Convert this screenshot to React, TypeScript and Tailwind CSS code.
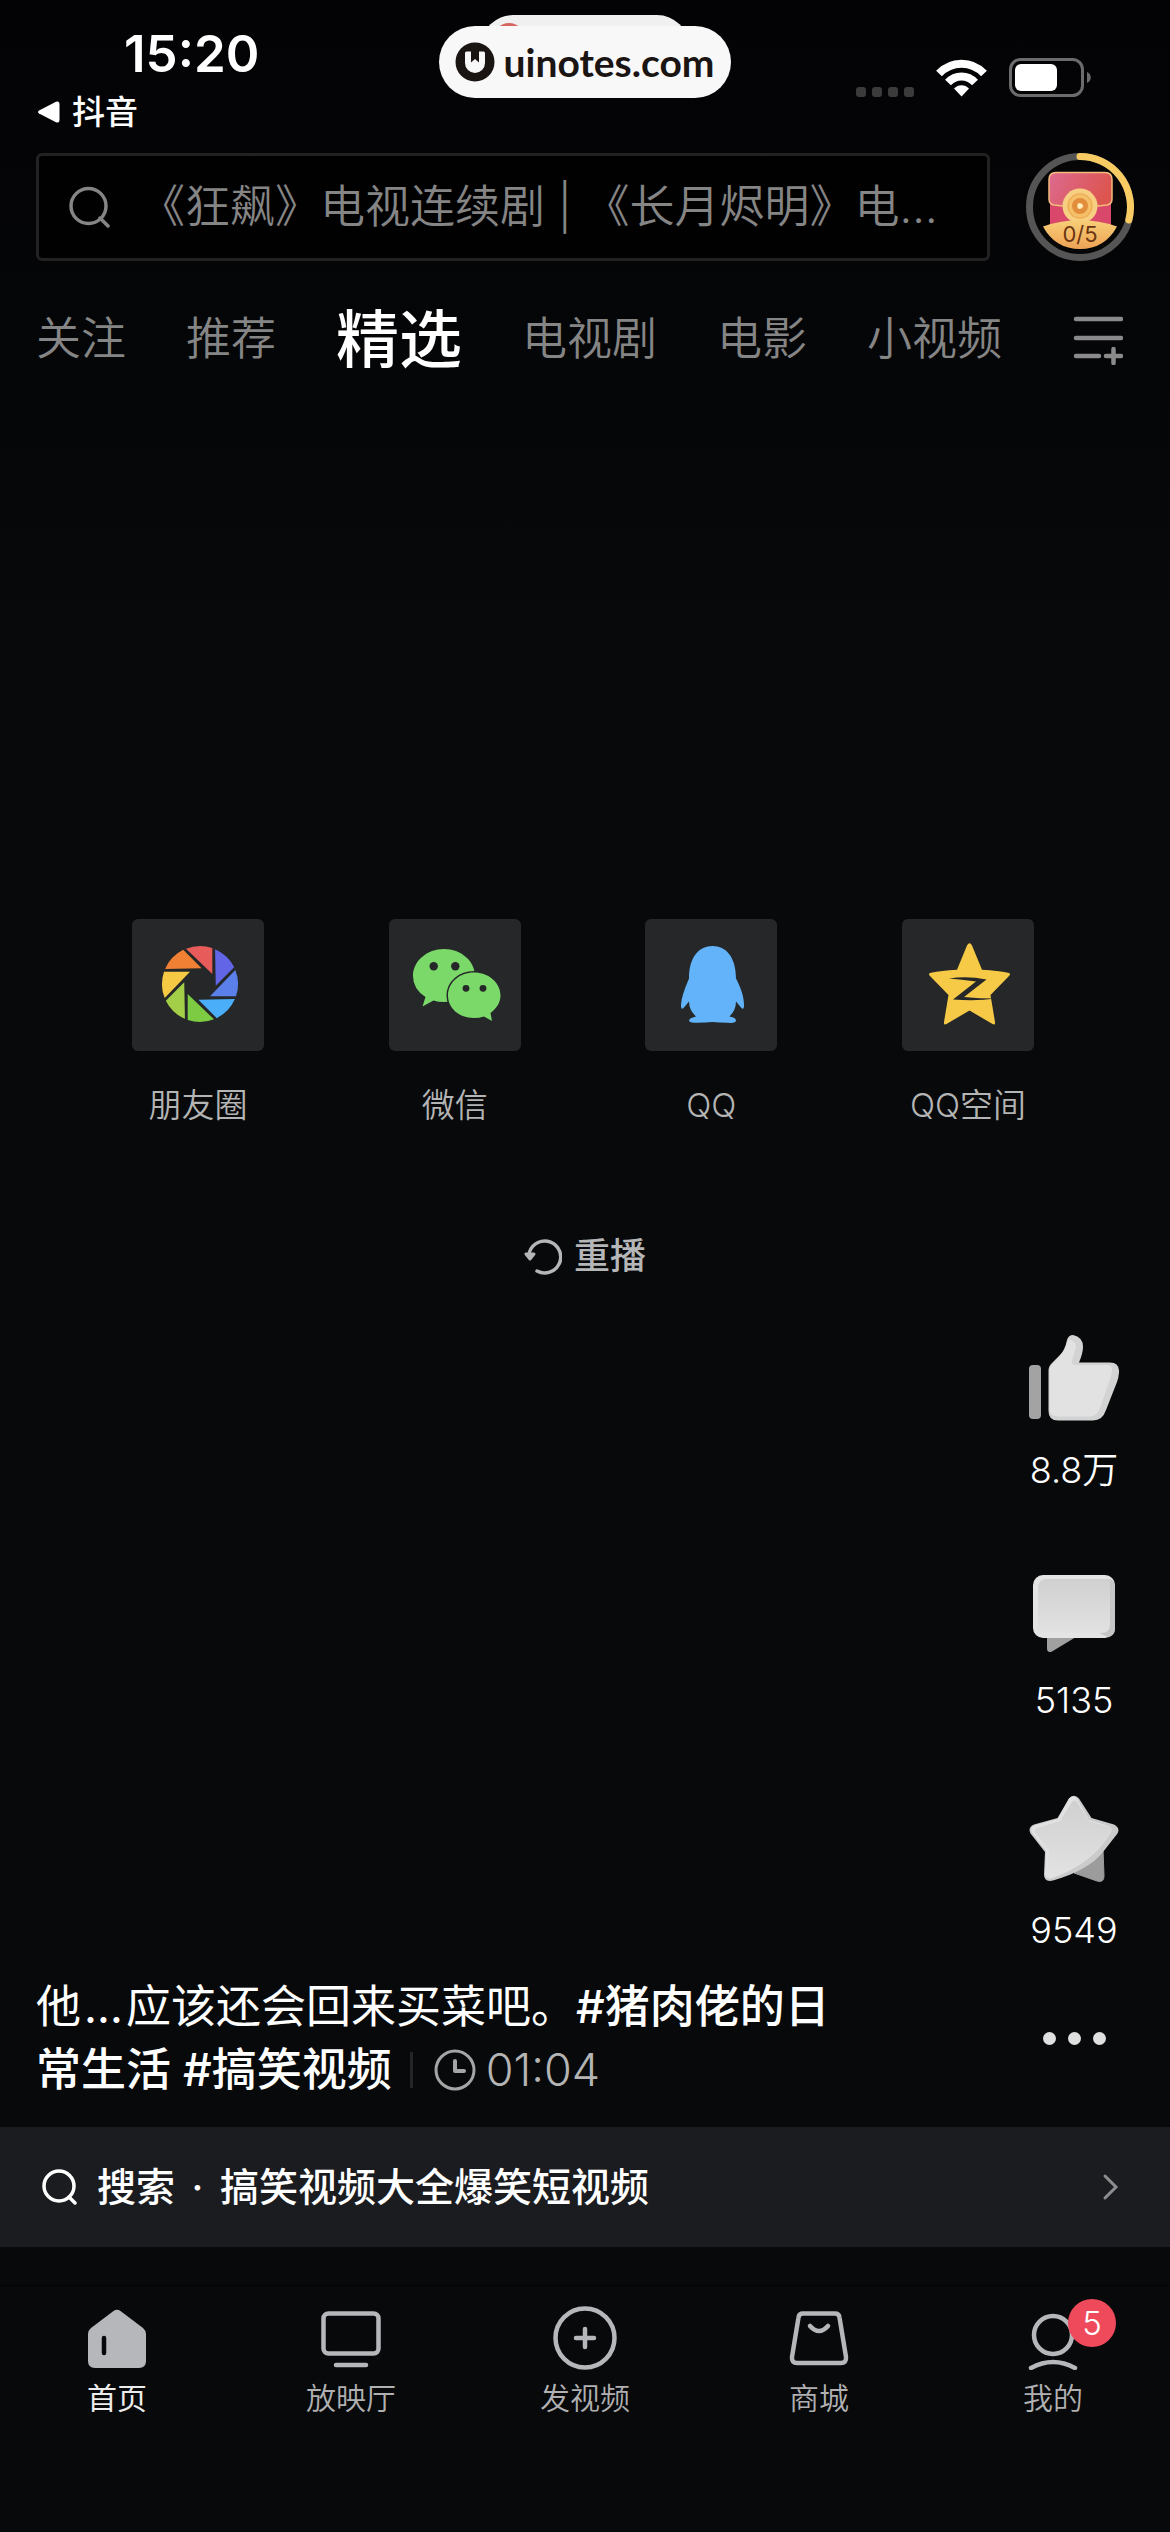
import type { ReactNode } from "react"

const tabs = ["关注", "推荐", "精选", "电视剧", "电影", "小视频"]

const shareTargets = [
  { name: "朋友圈", icon: <MomentsIcon /> },
  { name: "微信", icon: <WechatIcon /> },
  { name: "QQ", icon: <QQIcon /> },
  { name: "QQ空间", icon: <QzoneIcon /> },
]

const navItems = [
  { name: "首页", icon: <HomeIcon />, active: true },
  { name: "放映厅", icon: <TheaterIcon /> },
  { name: "发视频", icon: <PublishIcon /> },
  { name: "商城", icon: <MallIcon /> },
  { name: "我的", icon: <MineIcon />, badge: 5 },
]

export default function App() {
  return (
    <div className="flex min-h-screen w-full flex-col bg-linear-to-b from-[#030305] to-[#07090a] to-25% font-['Inter','Noto_Sans_CJK_SC',sans-serif] text-white">
      <StatusBar />
      <header>
        <div className="flex items-center gap-9 px-9">
          <SearchBox />
          <RewardButton />
        </div>
        <ChannelTabs />
      </header>
      <main className="flex flex-1 flex-col">
        <div className="flex justify-between pt-[535px] pr-34 pl-33">
          {shareTargets.map(target => (
            <button key={target.name} className="flex w-33 flex-col items-center">
              <span className="size-33 rounded-md bg-[#252728]">{target.icon}</span>
              <span className="mt-[30px] text-[33px] leading-[48px] font-[350] whitespace-nowrap text-[#b4b4b4]">{target.name}</span>
            </button>
          ))}
        </div>
        <button className="mt-[102px] flex h-[50px] items-center gap-3 self-center text-[36px] font-medium text-[#b4b6b8]">
          <ReplayIcon />
          重播
        </button>
        <div className="mt-auto flex items-end justify-between pt-[52px]">
          <Caption />
          <SideActions />
        </div>
      </main>
      <RelatedSearch />
      <BottomNav />
    </div>
  )
}

function StatusBar() {
  return (
    <div className="relative flex items-start justify-between pt-6 pr-[79px] pb-[21px] pl-[37px]">
      <div className="flex flex-col items-start">
        <span className="ml-[87px] text-[51px] leading-[60px] font-semibold">15:20</span>
        <a href="#douyin" className="mt-2 flex items-center gap-3 text-[33px] leading-[40px] font-medium">
          <svg className="h-[22px] w-[23px]" viewBox="0 0 23 22" fill="currentColor">
            <path d="M2 9.5 19 .8Q22.500 -.5 22.500 3v16q0 3.500-3.500 2.200L2 12.500q-2-1.500 0-3Z" />
          </svg>
          抖音
        </a>
      </div>
      <div className="flex items-end gap-[22px] pt-[34px]">
        <div className="flex gap-1.5">
          <i className="size-2.5 rounded-[3px] bg-[#3b3b3c]" />
          <i className="size-2.5 rounded-[3px] bg-[#3b3b3c]" />
          <i className="size-2.5 rounded-[3px] bg-[#3b3b3c]" />
          <i className="size-2.5 rounded-[3px] bg-[#3b3b3c]" />
        </div>
        <svg className="h-[38px] w-[51px]" viewBox="0 0 51 38" fill="none" stroke="#fff">
          <path d="M3 14.500C15.500 1.500 35.500 1.500 48 14.500" strokeWidth="8" />
          <path d="M12 23.500c7.500-8 19.500-8 27 0" strokeWidth="8" />
          <path d="M18 29.500c4-4.500 11-4.500 15 0L25.500 37.500Z" fill="#fff" stroke="none" />
        </svg>
        <svg className="h-[39px] w-[82px]" viewBox="0 0 82 39">
          <rect x="1.500" y="1.500" width="72" height="36" rx="10" fill="none" stroke="#6b6b6c" strokeWidth="3" />
          <rect x="6" y="6" width="42" height="27" rx="6" fill="#fff" />
          <path d="M78 14c5 2 5 9 0 11Z" fill="#6b6b6c" />
        </svg>
      </div>
      <div className="absolute top-[15px] left-1/2 h-16 w-52 -translate-x-1/2 overflow-hidden rounded-full bg-[#f0f0f0]">
        <i className="absolute top-2 left-3 size-8 rounded-full bg-[#d4665f]" />
      </div>
      <div className="absolute top-[26px] left-1/2 flex h-18 w-73 -translate-x-1/2 items-center justify-center gap-2 rounded-full bg-[#f8f8f8] text-[#1a1413]">
        <svg className="size-10 shrink-0" viewBox="0 0 40 40">
          <circle cx="20" cy="20" r="19.500" fill="currentColor" />
          <path d="M10 11q0-1.500 1.500-1.500H16v11l4-3.500 4 3.500v-11h4.500Q30 9.500 30 11v10a10 10 0 0 1-20 0Z" fill="#f8f8f8" />
        </svg>
        <span className="font-['Lato',sans-serif] text-[39px] leading-[48px] font-bold">uinotes.com</span>
      </div>
    </div>
  )
}

function SearchBox() {
  return (
    <label className="flex h-27 min-w-0 flex-1 items-center rounded-md border-3 border-[#222223] bg-[#010101] pr-5 pl-[30px]">
      <svg className="size-[42px] shrink-0" viewBox="0 0 42 42" fill="none" stroke="#858585" strokeWidth="3.500" strokeLinecap="round">
        <circle cx="19.500" cy="20" r="17.500" />
        <path d="m31 32 8 8" />
      </svg>
      <input
        type="search"
        aria-label="搜索"
        placeholder="《狂飙》电视连续剧 | 《长月烬明》电…"
        className="ml-[29px] min-w-0 flex-1 text-[45px] font-[350] outline-none placeholder:text-[#858585]"
      />
    </label>
  )
}

function RewardButton() {
  return (
    <button aria-label="红包任务" className="relative size-27 shrink-0">
      <svg viewBox="0 0 108 108" className="size-27">
        <defs>
          <linearGradient id="flap" x1="0" y1="0" x2="1" y2="0.3">
            <stop offset="0" stopColor="#dd6a90" />
            <stop offset="1" stopColor="#dc5550" />
          </linearGradient>
          <linearGradient id="gold" x1="0" y1="0" x2="0" y2="1">
            <stop offset="0" stopColor="#f8cf78" />
            <stop offset="1" stopColor="#eda254" />
          </linearGradient>
        </defs>
        <circle cx="54" cy="54" r="50.500" fill="#060607" stroke="#555556" strokeWidth="7" />
        <path d="M54 3.500A50.500 50.500 0 0 1 102.800 67" fill="none" stroke="#f8cc62" strokeWidth="7" strokeLinecap="round" />
        <rect x="24" y="24" width="61" height="52" fill="#d9486a" />
        <path d="M30 19.500h49q7 0 7 7V46q0 5-5 6-27 4-53 0-5-1-5-6V26.500q0-7 7-7Z" fill="url(#flap)" stroke="#f4bc7c" strokeWidth="1.500" />
        <circle cx="54" cy="53" r="17.500" fill="#f7cf83" />
        <circle cx="54" cy="53" r="12" fill="#f5c069" stroke="#eeaf55" strokeWidth="1.500" />
        <circle cx="54" cy="53" r="5.500" fill="#fbd790" stroke="#e28d3c" strokeWidth="5" />
        <path d="m52.500 50 5 3-5 3Z" fill="#fff1c7" />
        <path d="M17 73.500Q54 60.500 91 73.500 79 96 54 96T17 73.500Z" fill="url(#gold)" />
      </svg>
      <span className="absolute inset-x-0 top-[69px] text-center text-[22px] leading-6 text-[#6b3512]">0/5</span>
    </button>
  )
}

function ChannelTabs() {
  return (
    <nav className="relative mt-[33px] flex h-[90px] items-center justify-between pr-[47px] pl-9">
      <div className="flex items-center gap-15">
        {tabs.map(tab => (
          <button
            key={tab}
            className={tab === "精选" ? "text-[63px] leading-[90px] font-medium whitespace-nowrap" : "text-[45px] leading-[90px] font-[350] whitespace-nowrap text-[#858585]"}
          >
            {tab}
          </button>
        ))}
      </div>
      <button aria-label="更多频道">
        <svg className="h-13 w-[50px]" viewBox="0 0 50 52" fill="none" stroke="#8a8a8a" strokeWidth="4.500" strokeLinecap="round">
          <path d="M3 6h45M3 25h45M3 43h23M33 43h15M40.500 36v14" />
        </svg>
      </button>
    </nav>
  )
}

function Caption() {
  return (
    <div className="w-[840px] pb-[26px] pl-9 text-[45px] leading-[63px]">
      <p>
        他<span className="inline-block w-[45px] text-center">…</span>应该还会回来买菜吧。<b className="font-medium">#猪肉佬的日</b>
      </p>
      <p className="flex items-center">
        <b className="font-medium">常生活 #搞笑视频</b>
        <i className="ml-[18px] h-9 w-[3px] bg-[#242526]" />
        <svg className="ml-[21px] size-[42px]" viewBox="0 0 42 42" fill="none" stroke="#a5a5a5" strokeWidth="3" strokeLinecap="round" strokeLinejoin="round">
          <circle cx="21" cy="21" r="19" />
          <path d="M21 12v10h9" strokeWidth="4" />
        </svg>
        <span className="ml-2.5 font-light text-[#b4b4b4]">01:04</span>
      </p>
    </div>
  )
}

function SideActions() {
  return (
    <div className="flex w-48 flex-col items-center gap-17 pb-[74px]">
      <SideAction label="8.8万">
        <defs>
          <linearGradient id="face" x1="0" y1="0" x2="0" y2="1">
            <stop offset="0" stopColor="#d0d0d0" />
            <stop offset="1" stopColor="#e2e2e2" />
          </linearGradient>
        </defs>
        <rect x="0" y="32" width="12" height="54" rx="4" fill="#a3a3a3" />
        <path d="M19.500 38q0-5 3.500-8l8-8q5-5 7-15 1.500-5 6-5 10 2 10 12 0 6-4 15.500h31q9.500 0 9 10-.5 6-2 9.500L77 77q-3.500 10.500-13 10.500H29q-9.500 0-9.500-9.500Z" fill="#d3d3d3" />
        <path d="M20.500 38q0-5 3.500-7.500l7-8q5-5 7-13l1.500-3.500Q49 9 46.500 16L43 27q-1.500 5 4 5h31q6 0 5 6-1 5-2 8L71 75q-3 8-10 8.500H29q-8.500 0-8.500-8Z" fill="#e2e2e2" />
      </SideAction>
      <SideAction label="5135">
        <path d="M18 70v15q0 5.500 5 3.500l24-14.500Z" fill="#a0a0a0" />
        <rect x="4" y="12" width="82" height="63" rx="10" fill="#e4e4e4" />
        <path d="M81 16q5 2 5 8v41q0 8-7 9l-9-4 10-8Z" fill="#c6c6c6" />
        <path d="M18 16h63v45q0 9-9 9H9V25q0-9 9-9Z" fill="url(#face)" />
      </SideAction>
      <SideAction label="9549">
        <path d="M45 80 56 60l18-4 1 27q0 7-7 5Z" fill="#9c9c9c" stroke="#9c9c9c" strokeLinejoin="round" />
        <path d="M40 5.500q5-5.500 10 0L62.500 25 85 31.500q6.500 3.500 3.500 9L74 59Q60 77 24 87.500q-9 2-9-6L16 59 1.500 40.500q-3-6 3.500-9L28.500 25Z" fill="#cbcbcb" />
        <path d="M40 5.500q5-5 8.500 1L60 27q22 6 22.500 9 .5 4-12 19Q52 75 22 85.500q-6 1-6-5L17 58 3 40q-3-6 3.500-8L29 26Z" fill="#e2e2e2" />
        <path d="M43 9q3-3 5 0L60 28q22 6 22 8 .5 4-12 19Q52 74 21 84q-3 0-2.500-5L20 58 6 39q-1-3 2-4l23-7Z" fill="url(#face)" />
      </SideAction>
      <button aria-label="更多" className="flex h-[30px] items-center gap-3">
        <i className="size-[13px] rounded-full bg-[#e0e0e0]" />
        <i className="size-[13px] rounded-full bg-[#e0e0e0]" />
        <i className="size-[13px] rounded-full bg-[#e0e0e0]" />
      </button>
    </div>
  )
}

function SideAction({ label, children }: { label: string; children: ReactNode }) {
  return (
    <button className="flex flex-col items-center">
      <svg className="size-[90px]" viewBox="0 0 90 90">{children}</svg>
      <span className="mt-[22px] text-[36px] leading-[50px] font-[350]">{label}</span>
    </button>
  )
}

function RelatedSearch() {
  return (
    <a href="#search" className="flex h-30 items-center bg-[#1b1c1f] pr-[50px] pl-[42px]">
      <svg className="size-9" viewBox="0 0 36 36" fill="none" stroke="#fff" strokeWidth="3.500" strokeLinecap="round">
        <circle cx="17" cy="17" r="15" />
        <path d="m27 28 6 6" />
      </svg>
      <span className="ml-[19px] flex flex-1 text-[39px] font-medium">
        搜索<span className="w-[45px] text-center">·</span>搞笑视频大全爆笑短视频
      </span>
      <svg className="h-7 w-[18px]" viewBox="0 0 18 28" fill="none" stroke="#8c8d8f" strokeWidth="3" strokeLinecap="round">
        <path d="m3 3 11 11L3 25" />
      </svg>
    </a>
  )
}

function BottomNav() {
  return (
    <nav className="mt-[38px] grid grid-cols-5 border-t border-[#020304] pt-5 pb-[114px]">
      {navItems.map(item => (
        <button key={item.name} className="flex flex-col items-center">
          <span className="relative size-16 text-[#b6b7bb]">
            {item.icon}
            {item.badge && (
              <span className="absolute -top-[7px] left-[47px] size-12 rounded-full bg-[#ef4a5c] text-center text-[33px] leading-[48px] font-light text-white">{item.badge}</span>
            )}
          </span>
          <span className={item.active ? "mt-2 text-[30px] leading-[40px] text-[#ececec]" : "mt-2 text-[30px] leading-[40px] font-[350] text-[#b0b0b2]"}>{item.name}</span>
        </button>
      ))}
    </nav>
  )
}

function MomentsIcon() {
  const blades = ["#e75c5a", "#6266e6", "#5b80ea", "#4aaef8", "#7ccb42", "#a3cf48", "#f6c945", "#ef8034"]
  return (
    <svg viewBox="0 0 132 132">
      {blades.map((color, i) => (
        <path key={color} d="M-14-35.300A38 38 0 0 1 12.300-36V-10Z" fill={color} transform={`translate(68 65) rotate(${i * 45})`} />
      ))}
    </svg>
  )
}

function WechatIcon() {
  return (
    <svg viewBox="0 0 132 132">
      <g transform="translate(24 30)" fill="#7bd96a">
        <path d="M31 0c17 0 31 12 31 27S48 53 31 53q-6 0-10.500-1.500L9.500 57.500l3-9.500Q0 40 0 27C0 12 14 0 31 0Z" />
        <path d="M61 23.500c14.500 0 26.500 10 26.500 23 0 7-4 13-10 17.500l1.500 8-8-4.500q-5 1.500-10 1.500c-14.500 0-26-9.500-26-22.500s11.500-23 26-23Z" stroke="#252728" strokeWidth="3" paintOrder="stroke" />
        <g fill="#252728">
          <circle cx="20.700" cy="17.300" r="4.200" />
          <circle cx="42.300" cy="17.300" r="4.200" />
          <circle cx="53" cy="39.300" r="3.400" />
          <circle cx="70" cy="39.300" r="3.400" />
        </g>
      </g>
    </svg>
  )
}

function QQIcon() {
  return (
    <svg viewBox="0 0 132 132">
      <path
        transform="translate(36 27)"
        fill="#62b3fa"
        d="M31.500 0C45 0 55 11 55 32.500 60 42 63 51 63 59q0 6-3 2.500L55 55.500Q55 64 48.500 70.500q6.500 1 6.500 4t-8 2.300q-9 0-15.500-.8-6.500.8-15.500.8-8 0-8-2.300t7-4Q8 64 8 55.500L3 61.500Q0 65 0 59q0-8 8-26.500C8 11 18 0 31.500 0Z"
      />
    </svg>
  )
}

function QzoneIcon() {
  return (
    <svg viewBox="0 0 132 132">
      <g transform="translate(27 24)">
        <path
          fill="#f6ca47"
          d="M38 2.500q2.500-4.500 5 0L53 26.700q16 1 26 3 3.500.8 1 3.300L61.500 52 66 79q.5 3.500-2.500 2L40.500 67.500 17.500 81q-3 1.500-2.500-2l4.500-27L1 33q-2.500-2.500 1-3.300 10-2 26-3Z"
        />
        <path fill="#252728" d="M20 35.500q18-3 37.500 1L35 54q16 1.500 32 1.500-20 3-43 1L47 38.500q-15-2-27-3Z" />
      </g>
    </svg>
  )
}

function ReplayIcon() {
  return (
    <svg className="size-[38px]" viewBox="0 0 38 38" fill="none" stroke="currentColor" strokeWidth="3.500" strokeLinecap="round">
      <path d="M5.500 15A16 16 0 1 1 13 34" />
      <path d="M2 17h8l-4 5Z" fill="currentColor" strokeWidth="3" strokeLinejoin="round" />
    </svg>
  )
}

function HomeIcon() {
  return (
    <svg viewBox="0 0 64 64">
      <path d="M28.500 5q3.500-2.500 7 0L58 22q3 2.500 3 6v27q0 7-7 7H10q-7 0-7-7V28q0-3.500 3-6Z" fill="currentColor" />
      <path d="M19 32v15" stroke="#08090a" strokeWidth="4.500" strokeLinecap="round" />
    </svg>
  )
}

function TheaterIcon() {
  return (
    <svg viewBox="0 0 64 64" fill="none" stroke="currentColor" strokeWidth="4.500" strokeLinecap="round">
      <rect x="4.500" y="7.500" width="55" height="40" rx="5" />
      <path d="M17 59h30" />
    </svg>
  )
}

function PublishIcon() {
  return (
    <svg viewBox="0 0 64 64" fill="none" stroke="currentColor" strokeWidth="4.500" strokeLinecap="round">
      <circle cx="32" cy="32" r="29.500" />
      <path d="M32 23v18M23 32h18" />
    </svg>
  )
}

function MallIcon() {
  return (
    <svg viewBox="0 0 64 64" fill="none" stroke="currentColor" strokeWidth="4.500" strokeLinecap="round">
      <path d="M16 7.500h32q4 0 4.500 4L59 51q.5 6-5 6H10q-5.500 0-5-6l6.500-39.500q.5-4 4.500-4Z" />
      <path d="M23 20q9 10 18 0" />
    </svg>
  )
}

function MineIcon() {
  return (
    <svg viewBox="0 0 64 64" fill="none" stroke="currentColor" strokeWidth="4.500" strokeLinecap="round">
      <circle cx="32" cy="29" r="19" />
      <path d="M10 62q22-12 44 0" />
    </svg>
  )
}
